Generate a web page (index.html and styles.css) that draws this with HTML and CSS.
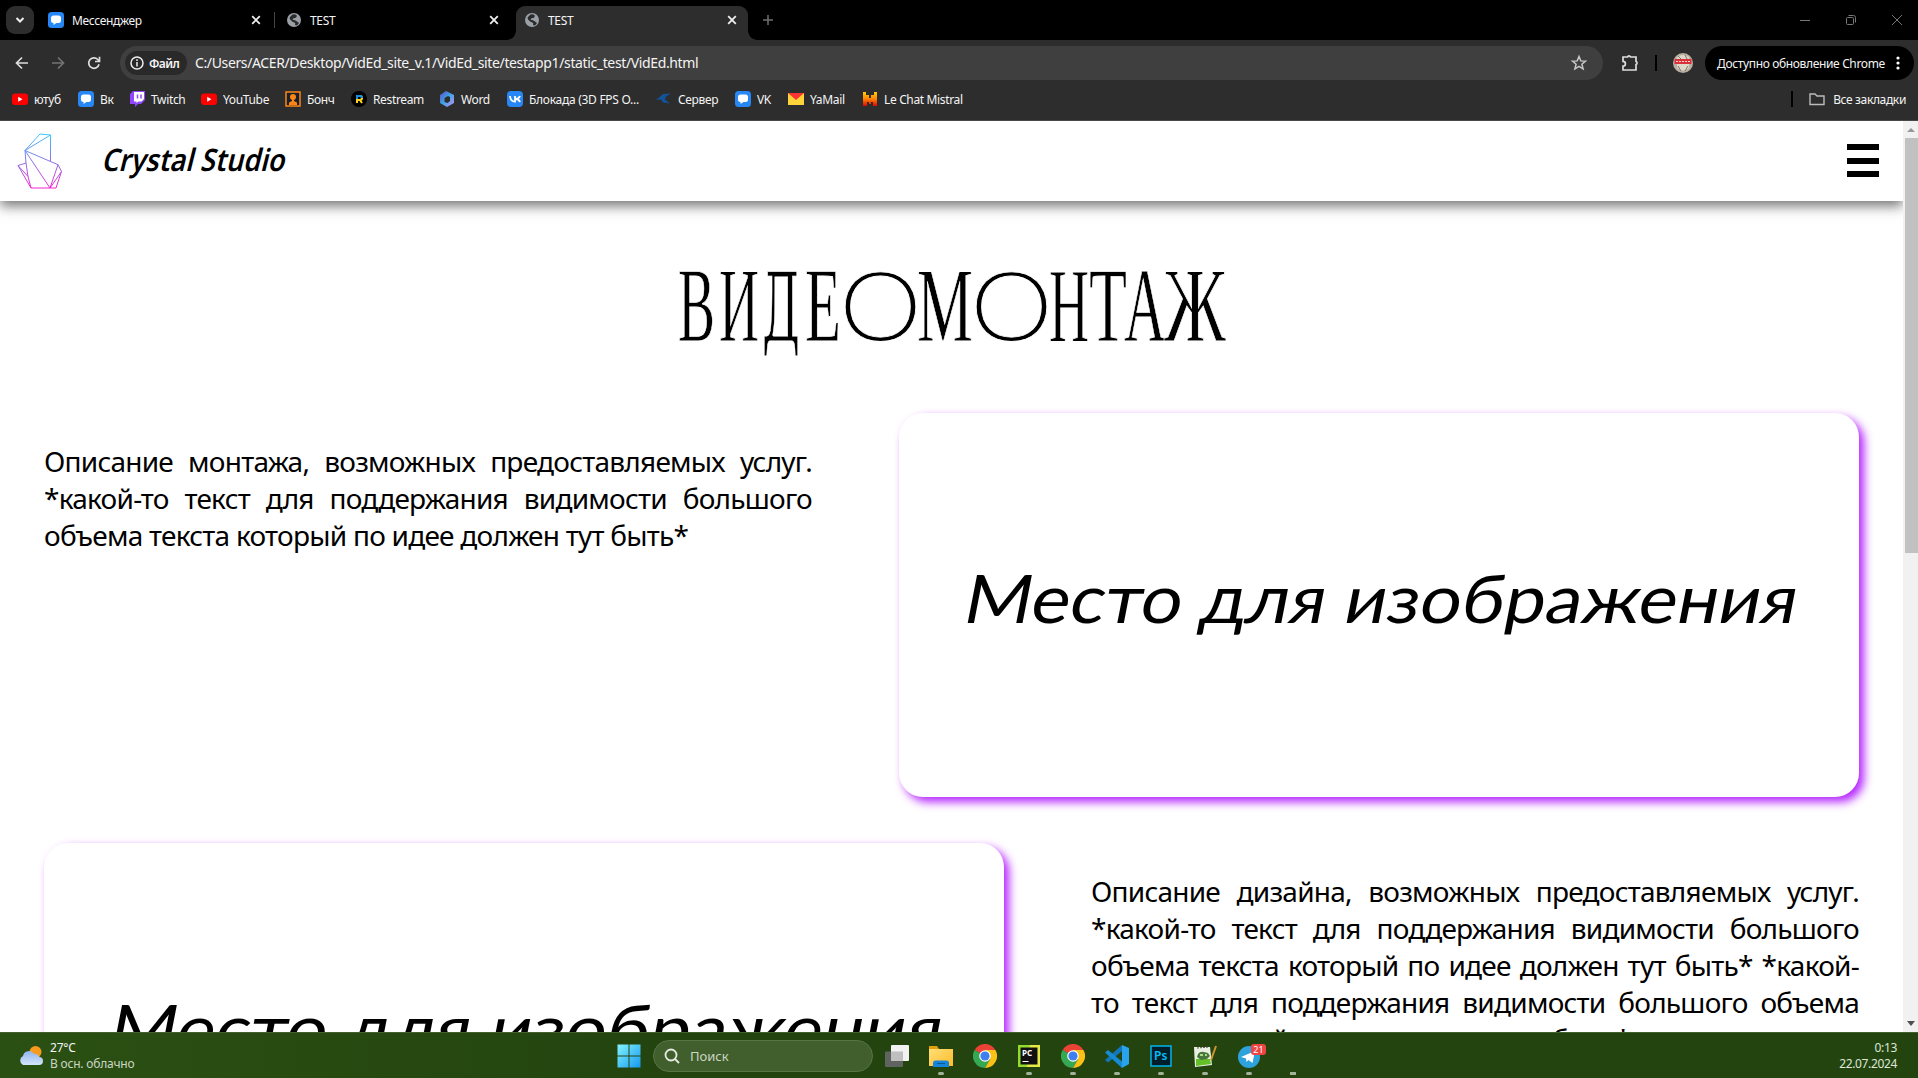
FILE: index.html
```html
<!DOCTYPE html>
<html lang="ru">
<head>
<meta charset="utf-8">
<title>TEST</title>
<link rel="stylesheet" href="styles.css">
</head>
<body>
<svg class="defs" width="0" height="0">
  <defs>
    <linearGradient id="crystal" x1="0" y1="0" x2="0" y2="56" gradientUnits="userSpaceOnUse"><stop offset="0" stop-color="#35cdf8"/><stop offset=".5" stop-color="#8a72e6"/><stop offset="1" stop-color="#f522d0"/></linearGradient>
    <linearGradient id="win" x1="0" y1="0" x2="1" y2="1"><stop offset="0" stop-color="#84f3ff"/><stop offset="1" stop-color="#1499ee"/></linearGradient>
    <linearGradient id="folder" x1="0" y1="0" x2="1" y2="1"><stop offset="0" stop-color="#ffdf76"/><stop offset="1" stop-color="#fdbb2c"/></linearGradient>
    <linearGradient id="cloud" x1="0" y1="0" x2="0" y2="1"><stop offset="0" stop-color="#8fb6f2"/><stop offset="1" stop-color="#d5e4fb"/></linearGradient>
    <linearGradient id="office" x1="0" y1="0" x2="1" y2="1"><stop offset="0" stop-color="#5d4cc8"/><stop offset=".5" stop-color="#3fa7e8"/><stop offset="1" stop-color="#c98af0"/></linearGradient>
    <linearGradient id="mistral" x1="0" y1="0" x2="0" y2="1"><stop offset="0" stop-color="#ffd000"/><stop offset=".5" stop-color="#ff8205"/><stop offset="1" stop-color="#e10500"/></linearGradient>
    <symbol id="msg" viewBox="0 0 16 16"><rect width="16" height="16" rx="3.500" fill="#2787f5"/><path d="M5.500 3.500h5Q13 3.500 13 6v2.500q0 2.500-2.500 2.500H8.500L5.500 13v-2Q3 11 3 8.500V6q0-2.500 2.500-2.500z" fill="#fff"/></symbol>
    <symbol id="globe" viewBox="0 0 16 16"><circle cx="8" cy="8" r="7" fill="#9aa0a6"/><path d="M6.500 2.500 9 2.200l2 1.500-1 2-2.500.5-1 1.500 2.500.500 2 1.300L13 11l-2 2.500-2-.5.2-2-2.700-1.200L4 7.500l-.500-2z" fill="#2b2b2b"/></symbol>
    <symbol id="yt" viewBox="0 0 16 16"><rect y="2.500" width="16" height="11.500" rx="3" fill="#f00"/><path d="M6.200 5.800v4.900L10.500 8.200z" fill="#fff"/></symbol>
    <symbol id="close" viewBox="0 0 10 10"><path d="M1.200 1.200l7.600 7.600M8.800 1.200 1.200 8.800" stroke="#eee" stroke-width="1.800"/></symbol>
    <symbol id="chrome" viewBox="0 0 24 24"><path d="M12 12 1.600 6A12 12 0 0 1 22.400 6z" fill="#ea4335"/><path d="M12 12 1.600 6A12 12 0 0 0 12 24l5.200-9z" fill="#34a853"/><path d="M12 6h10.400A12 12 0 0 1 12 24l5.200-9z" fill="#fbc116"/><circle cx="12" cy="12" r="5.800" fill="#fff"/><circle cx="12" cy="12" r="4.600" fill="#3f7ff0"/></symbol>
  </defs>
</svg>

<header class="tabs">
  <span class="tab-search"><svg width="10" height="10" viewBox="0 0 10 10" fill="none" stroke="#eee" stroke-width="2"><path d="M1.500 3 5 6.500 8.500 3"/></svg></span>
  <div class="tab first"><svg width="16" height="16"><use href="#msg"/></svg><span>Мессенджер</span><svg class="x" width="10" height="10"><use href="#close"/></svg></div>
  <i class="tab-line"></i>
  <div class="tab second"><svg width="16" height="16"><use href="#globe"/></svg><span>TEST</span><svg class="x" width="10" height="10"><use href="#close"/></svg></div>
  <div class="tab active"><svg width="16" height="16"><use href="#globe"/></svg><span>TEST</span><svg class="x" width="10" height="10"><use href="#close"/></svg></div>
  <svg class="plus" width="12" height="12" stroke="#6e6e6e" stroke-width="1.500"><path d="M6 1v10M1 6h10"/></svg>
  <div class="window-controls">
    <svg width="12" height="12" stroke="#777"><path d="M1 6.500h10"/></svg>
    <svg width="12" height="12" fill="none" stroke="#777"><rect x="1.500" y="3.500" width="7" height="7" rx="1"/><path d="M3.500 1.500h5q2 0 2 2v5"/></svg>
    <svg width="12" height="12" stroke="#777"><path d="M1 1l10 10M11 1 1 11"/></svg>
  </div>
</header>

<nav class="toolbar">
  <svg class="back" width="14" height="14" viewBox="0 0 14 14" fill="none" stroke="#ddd" stroke-width="1.700"><path d="M13 7H2M7 1.500 1.500 7 7 12.500"/></svg>
  <svg class="forward" width="14" height="14" viewBox="0 0 14 14" fill="none" stroke="#737373" stroke-width="1.700"><path d="M1 7h11M7 1.500 12.500 7 7 12.500"/></svg>
  <svg class="reload" width="14" height="14" viewBox="0 0 14 14" fill="none" stroke="#ddd" stroke-width="1.700"><path d="M12 8.200A5.200 5.200 0 1 1 10.700 3.500L12.500 5.300M12.500.800v4.700H8"/></svg>
  <div class="omnibox">
    <span class="chip"><svg width="14" height="14" fill="none" stroke="#eee" stroke-width="1.500"><circle cx="7" cy="7" r="6"/><path d="M7 6v4.500M7 3.300V5"/></svg><b>Файл</b></span>
    <span class="url">C:/Users/ACER/Desktop/VidEd_site_v.1/VidEd_site/testapp1/static_test/VidEd.html</span>
    <svg class="star" width="16" height="16" viewBox="0 0 16 16" fill="none" stroke="#c7c7c7" stroke-width="1.500"><path d="M8 1.500l1.800 4.400 4.700.3-3.600 3 1.200 4.700L8 11.300l-4.100 2.600 1.200-4.700-3.600-3 4.700-.3z"/></svg>
  </div>
  <svg class="puzzle" width="18" height="18" viewBox="0 0 18 18" fill="none" stroke="#ddd" stroke-width="1.700"><path d="M2 3h4.500a1.600 1.600 0 0 1 3 0H15v4.500a1.600 1.600 0 0 1 0 3V16H2v-3.800a2.200 2.200 0 0 0 0-4.800z"/></svg>
  <i class="black-line"></i>
  <svg class="avatar" width="20" height="20"><circle cx="10" cy="10" r="10" fill="#b8afa1"/><path d="M4 4Q10 0 16 4v11q-6 5-12 0z" fill="#ded8ca"/><path d="M5 3l3 3M12 2l2 4M5 13l3 5M15 13l-3 5" stroke="#807568"/><rect x="1.500" y="6" width="17" height="5" fill="#db3039"/><path d="M3 8.500h14" stroke="#ffd2d0" stroke-dasharray="2 1"/></svg>
  <div class="update"><span>Доступно обновление Chrome</span><svg width="4" height="16" fill="#fff"><circle cx="2" cy="3" r="1.600"/><circle cx="2" cy="8" r="1.600"/><circle cx="2" cy="13" r="1.600"/></svg></div>
</nav>

<nav class="bookmarks">
  <div class="marks">
    <span><svg width="16" height="16"><use href="#yt"/></svg>ютуб</span>
    <span><svg width="16" height="16"><use href="#msg"/></svg>Вк</span>
    <span><svg width="15" height="16" viewBox="0 0 15 16"><path d="M3 0h12v9l-4 4H8l-3 3v-3H0V3z" fill="#9147ff"/><path d="M4 1h10v7l-2.500 2.500h-3L6.500 12v-1.500H4z" fill="#fff"/><path d="M7.500 3.500v4M11 3.500v4" stroke="#9147ff" stroke-width="1.500"/></svg>Twitch</span>
    <span><svg width="16" height="16"><use href="#yt"/></svg>YouTube</span>
    <span><svg width="16" height="16"><rect x="1" y="1" width="14" height="14" fill="#17202c" stroke="#ff8614" stroke-width="1.500"/><circle cx="8" cy="6" r="3" fill="#ff8614"/><path d="M7 8h2v2l3 1.500V14H4v-2.500L7 10z" fill="#ff8614"/></svg>Бонч</span>
    <span><svg width="16" height="16"><circle cx="8" cy="8" r="8" fill="#000"/><path d="M6 12V5h3q2 0 2 2T9 9H6M9 9l2 3" fill="none" stroke="#ffd51b" stroke-width="2"/><path d="M6 8V5h3q2 0 2 2" fill="none" stroke="#1b8dde" stroke-width="2"/></svg>Restream</span>
    <span><svg width="16" height="16"><path d="M7 0l8 4v8l-7 4-7-4V4z" fill="url(#office)"/><path d="M9 5 5.500 7v4l3 1 2.500-2V6z" fill="#2d2d2d"/></svg>Word</span>
    <span class="long"><svg width="16" height="16"><rect width="16" height="16" rx="4" fill="#2787f5"/><path d="M3 5q.5 5.500 5 5.500V5M13 5q-1 3-5 3 4 0 5 3" fill="none" stroke="#fff" stroke-width="1.800"/></svg>Блокада (3D FPS O...</span>
    <span><svg width="16" height="16"><path d="M0 9 7 3l8-.5-5 3-1 3 5 4-7-1-2-3z" fill="#12539a"/></svg>Сервер</span>
    <span><svg width="16" height="16"><use href="#msg"/></svg>VK</span>
    <span><svg width="16" height="16"><path d="M0 2h16v12H0z" fill="#ffd43b"/><path d="M0 2h16L8 9z" fill="#f33"/></svg>YaMail</span>
    <span><svg width="16" height="16"><path d="M1 1h3v3h3v3h2V4h3V1h3v14h-4v-4H9v2H7v-2H5v4H1z" fill="url(#mistral)"/></svg>Le Chat Mistral</span>
  </div>
  <div class="all-marks"><i class="black-line"></i><svg width="16" height="14" fill="none" stroke="#bbb" stroke-width="1.400"><path d="M1 2h5l2 2h7v8.500H1z"/></svg><span>Все закладки</span></div>
</nav>

<div class="viewport">
  <main class="site">
    <header class="site-header">
      <svg class="logo" width="45" height="58" viewBox="0 0 45 58" fill="none" stroke="url(#crystal)" stroke-width="1"><path d="M8 17.500 23 1l10.500 1L8 17.500 33.500 28.500V2M8 17.500 9 30l-8 2.500 13 22.500h25l5.500-16.500L41 31.700 33.500 28.500M8 17.500 33 55l8-23.300M33 55l11.500-16.500M1 32.500 11 43.500M9 30l2 13.500 3 11.500"/></svg>
      <svg class="brand" width="200" height="44"><text transform="translate(-1 32) skewX(-14)" textLength="183" lengthAdjust="spacingAndGlyphs">Crystal Studio</text></svg>
      <div class="burger"><i></i><i></i><i></i></div>
    </header>
    <h1><svg width="560" height="110"><text y="61"><tspan x="9" textLength="37" lengthAdjust="spacingAndGlyphs">В</tspan><tspan x="50" textLength="40" lengthAdjust="spacingAndGlyphs">И</tspan><tspan x="93" class="de" textLength="38" lengthAdjust="spacingAndGlyphs">Д</tspan><tspan x="136" textLength="36" lengthAdjust="spacingAndGlyphs">Е</tspan><tspan x="170" class="round" textLength="83" lengthAdjust="spacingAndGlyphs">О</tspan><tspan x="248" textLength="56" lengthAdjust="spacingAndGlyphs">М</tspan><tspan x="301" class="round" textLength="83" lengthAdjust="spacingAndGlyphs">О</tspan><tspan x="380" textLength="40" lengthAdjust="spacingAndGlyphs">Н</tspan><tspan x="420" textLength="38" lengthAdjust="spacingAndGlyphs">Т</tspan><tspan x="455" textLength="42" lengthAdjust="spacingAndGlyphs">А</tspan><tspan x="495" textLength="62" lengthAdjust="spacingAndGlyphs">Ж</tspan></text></svg></h1>
    <section class="service">
      <p><span>Описание монтажа, возможных предоставляемых услуг.</span><span>*какой-то текст для поддержания видимости большого</span><span class="last">объема текста который по идее должен тут быть*</span></p>
      <div class="placeholder"><svg width="960" height="384"><text transform="translate(62 210) skewX(-11)" textLength="833" lengthAdjust="spacingAndGlyphs">Место для изображения</text></svg></div>
    </section>
    <section class="service">
      <div class="placeholder"><svg width="960" height="384"><text transform="translate(62 210) skewX(-11)" textLength="833" lengthAdjust="spacingAndGlyphs">Место для изображения</text></svg></div>
      <p><span>Описание дизайна, возможных предоставляемых услуг.</span><span>*какой-то текст для поддержания видимости большого</span><span>объема текста который по идее должен тут быть* *какой-</span><span>то текст для поддержания видимости большого объема</span><span class="last">текста который по идее должен тут быть*</span></p>
    </section>
  </main>
  <aside class="scrollbar"><i class="up"></i><i class="thumb"></i><i class="down"></i></aside>
</div>

<footer class="taskbar">
  <div class="weather">
    <svg width="25" height="22"><circle cx="17.500" cy="7" r="6" fill="#f79a20"/><path d="M5 20a5 5 0 0 1 0-9 6 6 0 0 1 11-2 4 4 0 0 1 5 3 4 4 0 0 1 0 8z" fill="url(#cloud)"/></svg>
    <div><span>27°C</span><span class="dim">В осн. облачно</span></div>
  </div>
  <div class="task start"><svg width="24" height="24" fill="url(#win)"><path d="M.500.500h11v11H.500zM12.500.500h11v11h-11zM.500 12.500h11v11H.500zM12.500 12.500h11v11h-11z"/></svg></div>
  <div class="search"><svg width="16" height="16" fill="none" stroke="#e6ece2" stroke-width="1.800"><circle cx="7" cy="7" r="5.500"/><path d="m11 11 4 4"/></svg><span>Поиск</span></div>
  <div class="task"><svg width="24" height="24"><rect y="7.500" width="18" height="15.500" rx="1" fill="#5f6460"/><rect x="6" y="1" width="18" height="16" rx="1" fill="#f2f2f2"/><path d="M6 7.500h12V17H6z" fill="#bfbfbf"/></svg></div>
  <div class="task open"><svg width="24" height="24"><path d="M0 2h8l2 3h14v17H0z" fill="#e1a00b"/><path d="M0 5h24v17H0z" fill="url(#folder)"/><path d="M4 23v-4q0-2.500 2.500-2.500h11q2.500 0 2.500 2.500v4z" fill="#1684d9"/><path d="M8 19.500h8" stroke="#075998"/></svg></div>
  <div class="task"><svg width="24" height="24"><use href="#chrome"/></svg></div>
  <div class="task open"><svg width="22" height="22"><path d="M0 0h22v22H0z" fill="#93dc2d"/><path d="M12 0h10v22H9z" fill="#e6ea47"/><path d="M2.500 2.500h17v17h-17z" fill="#111"/><text class="pc" x="4" y="11">PC</text><path d="M4.500 16.500h6" stroke="#fff"/></svg></div>
  <div class="task open"><svg width="24" height="24"><use href="#chrome"/></svg></div>
  <div class="task open"><svg width="24" height="24"><path d="M17 1 24 4v16l-7 4z" fill="#29a3ed"/><path d="M17 1v6L3 18.500 0 16z" fill="#1277ba"/><path d="M17 24v-6.500L3 6 0 8.500z" fill="#168bd2"/></svg></div>
  <div class="task open"><svg width="22" height="22"><rect x="1" y="1" width="20" height="20" fill="#001d2b" stroke="#00b4eb" stroke-width="1.500"/><text class="ps" x="4" y="15">Ps</text></svg></div>
  <div class="task open"><svg width="24" height="24"><path d="M1 3h16l2 18-17 2z" fill="#e9f0e2"/><path d="M3 15h14l1 5-15 2z" fill="#65bf29"/><path d="M5 10q2-3 6-2l4 1 2 3-3 3-6 1-4-3z" fill="#49773a"/><path d="M7 11h3M12 11h2" stroke="#a8d883" stroke-width="2"/><path d="m4 4 12-1" stroke="#555" stroke-dasharray="2 1"/><path d="m23 2-5 14" stroke="#cf942d" stroke-width="2"/></svg></div>
  <div class="task open"><svg width="24" height="24"><circle cx="12" cy="13" r="11" fill="#2da2dc"/><path d="m4 13 14-6-2.500 12-4-3-2 2-.5-3.500z" fill="#fff"/></svg><b class="badge">21</b></div>
  <div class="task open square"></div>
  <div class="clock"><span>0:13</span><span>22.07.2024</span></div>
</footer>
</body>
</html>
```
FILE: styles.css
```css
* { box-sizing: border-box; }
body { margin: 0; width: 1918px; height: 1078px; overflow: hidden; background: #fff; font: 12px "Noto Sans", "Open Sans", sans-serif; color: #f4f4f4; letter-spacing: -.35px; white-space: nowrap; }
svg { display: block; flex: none; overflow: visible; }
i { display: block; flex: none; }
.defs { position: absolute; }

.tabs { height: 40px; background: #000; display: flex; align-items: center; padding-left: 6px; }
.tab-search { width: 28px; height: 28px; border-radius: 9px; background: #2d2d2d; display: flex; align-items: center; justify-content: center; }
.tab { display: flex; align-items: center; gap: 8px; height: 34px; }
.tab .x { margin-left: auto; }
.first { width: 213px; margin-left: 14px; }
.tab-line { width: 1px; height: 16px; margin-left: 13px; background: #444; }
.second { width: 213px; margin-left: 11px; }
.active { position: relative; width: 232px; margin: 6px 0 0 17px; padding: 0 11px 6px 8px; background: #2d2d2d; border-radius: 9px 9px 0 0; }
.active::before, .active::after { content: ""; position: absolute; bottom: 0; width: 9px; height: 9px; }
.active::before { left: -9px; background: radial-gradient(circle at 0 0, #000 8.500px, #2d2d2d 9px); }
.active::after { right: -9px; background: radial-gradient(circle at 100% 0, #000 8.500px, #2d2d2d 9px); }
.plus { margin-left: 14px; }
.window-controls { margin-left: auto; padding-right: 15px; display: flex; gap: 34px; }

.toolbar { height: 46px; background: #2d2d2d; display: flex; align-items: center; padding: 0 4px 0 15px; }
.forward { margin-left: 22px; }
.reload { margin-left: 22px; }
.omnibox { width: 1483px; height: 34px; margin-left: 19px; padding: 0 16px 0 5px; background: #3f3f3f; border-radius: 17px; display: flex; align-items: center; }
.chip { width: 62px; height: 24px; border-radius: 12px; background: #292929; display: flex; align-items: center; gap: 5px; padding-left: 5px; }
.chip b { font-weight: 600; letter-spacing: -.6px; }
.url { margin-left: 8px; font-size: 14px; line-height: 18px; padding-bottom: 1px; letter-spacing: -.37px; }
.star { margin-left: auto; }
.puzzle { margin-left: 18px; }
.black-line { width: 2px; height: 16px; background: #000; }
.puzzle + .black-line { margin-left: 16px; }
.avatar { margin-left: 16px; }
.update { width: 209px; height: 34px; margin-left: auto; padding: 0 14px 0 12px; border-radius: 17px; background: #000; display: flex; align-items: center; justify-content: space-between; }

.bookmarks { height: 35px; background: #2d2d2d; border-bottom: 1px solid #484848; display: flex; justify-content: space-between; padding: 5px 12px 0 12px; }
.marks { display: grid; grid-template-columns: 66px 52px 71px 84px 66px 88px 68px 149px 79px 53px 74px 130px; height: 16px; }
.marks span { display: flex; align-items: center; gap: 6px; height: 16px; }
.marks .long { letter-spacing: -.28px; }
.all-marks { display: flex; align-items: center; height: 16px; }
.all-marks svg { margin: 0 8px 0 16px; }

.viewport { height: 911px; display: flex; overflow: hidden; color: #000; }
.site { width: 1903px; height: 911px; overflow: hidden; letter-spacing: 0; }
.site-header { position: relative; height: 80px; background: #fff; box-shadow: 0 5px 12px rgba(0,0,0,.55); display: flex; align-items: center; padding: 0 24px 0 17px; }
.logo { margin-top: 2px; }
.brand { margin-left: 40px; }
.brand text { font: 600 31px "Noto Sans", sans-serif; fill: #000; }
.burger { margin: 0 0 1px auto; width: 32px; height: 33px; display: flex; flex-direction: column; justify-content: space-between; }
.burger i { height: 6px; background: #000; }
h1 { margin: 0; padding-top: 79px; height: 212px; display: flex; justify-content: center; font-weight: 400; }
h1 svg { margin-left: -6px; }
h1 text { font: 106px "Liberation Serif", serif; fill: #000; stroke: #fff; stroke-width: .8px; }
h1 .de { font: 96px "DejaVu Serif", serif; }
h1 .round { font: 300 97px Lato, sans-serif; }
.service { display: flex; justify-content: space-between; align-items: flex-start; padding: 0 44px; height: 430px; }
.service p { width: 768px; margin: 30px 0 0; font: 28px/37px "Noto Sans", "Open Sans", sans-serif; letter-spacing: -.75px; }
.service p span { display: block; text-align: justify; text-align-last: justify; }
.service p .last { text-align-last: left; }
.placeholder { width: 960px; height: 384px; border-radius: 24px; background: #fff; box-shadow: 5px 5px 10px #b524ff; }
.placeholder text { font: 400 67px Lato, sans-serif; fill: #000; }
.scrollbar { width: 15px; background: #f1f1f1; display: flex; flex-direction: column; align-items: center; }
.up { border: 4px solid transparent; border-top: 0; border-bottom: 4px solid #999; margin: 7px 0 6px; }
.thumb { width: 13px; height: 415px; margin-left: 2px; background: #c1c1c1; }
.down { border: 4px solid transparent; border-bottom: 0; border-top: 5px solid #505050; margin: auto 0 6px; }

.taskbar { height: 46px; background: linear-gradient(90deg, #2b5013, #23440f 35%, #23440f); border-top: 1px solid #45602f; display: flex; align-items: center; letter-spacing: 0; }
.weather { width: 606px; padding-left: 18px; display: flex; align-items: center; gap: 7px; }
.weather div { display: flex; flex-direction: column; line-height: 16px; letter-spacing: -.2px; }
.dim { color: #cbd6c4; }
.task { position: relative; width: 44px; height: 45px; display: flex; align-items: center; justify-content: center; padding-top: 1px; }
.start { padding-left: 1px; }
.open::after { content: ""; position: absolute; left: 19px; bottom: 3px; width: 6px; height: 3px; border-radius: 1.500px; background: #a3b198; }
.square::after { border-radius: 0; }
.search { width: 220px; height: 32px; margin: 0 2px 0 3px; padding-left: 10px; border: 1px solid #587346; border-radius: 16px; background: #415f2d; display: flex; align-items: center; gap: 10px; color: #cbd6c3; font-size: 13px; }
.badge { position: absolute; left: 24px; top: 11px; width: 15px; height: 11px; border-radius: 3px; background: #ef4444; font: 9px/11px "Noto Sans", sans-serif; color: #fff; text-align: center; }
.pc { font: bold 8px "Noto Sans", sans-serif; fill: #fff; }
.ps { font: 600 12px "Noto Sans", sans-serif; fill: #00c0f5; }
.clock { margin-left: auto; padding-right: 21px; display: flex; flex-direction: column; align-items: flex-end; line-height: 16px; letter-spacing: -.35px; color: #dde6d8; }
```
